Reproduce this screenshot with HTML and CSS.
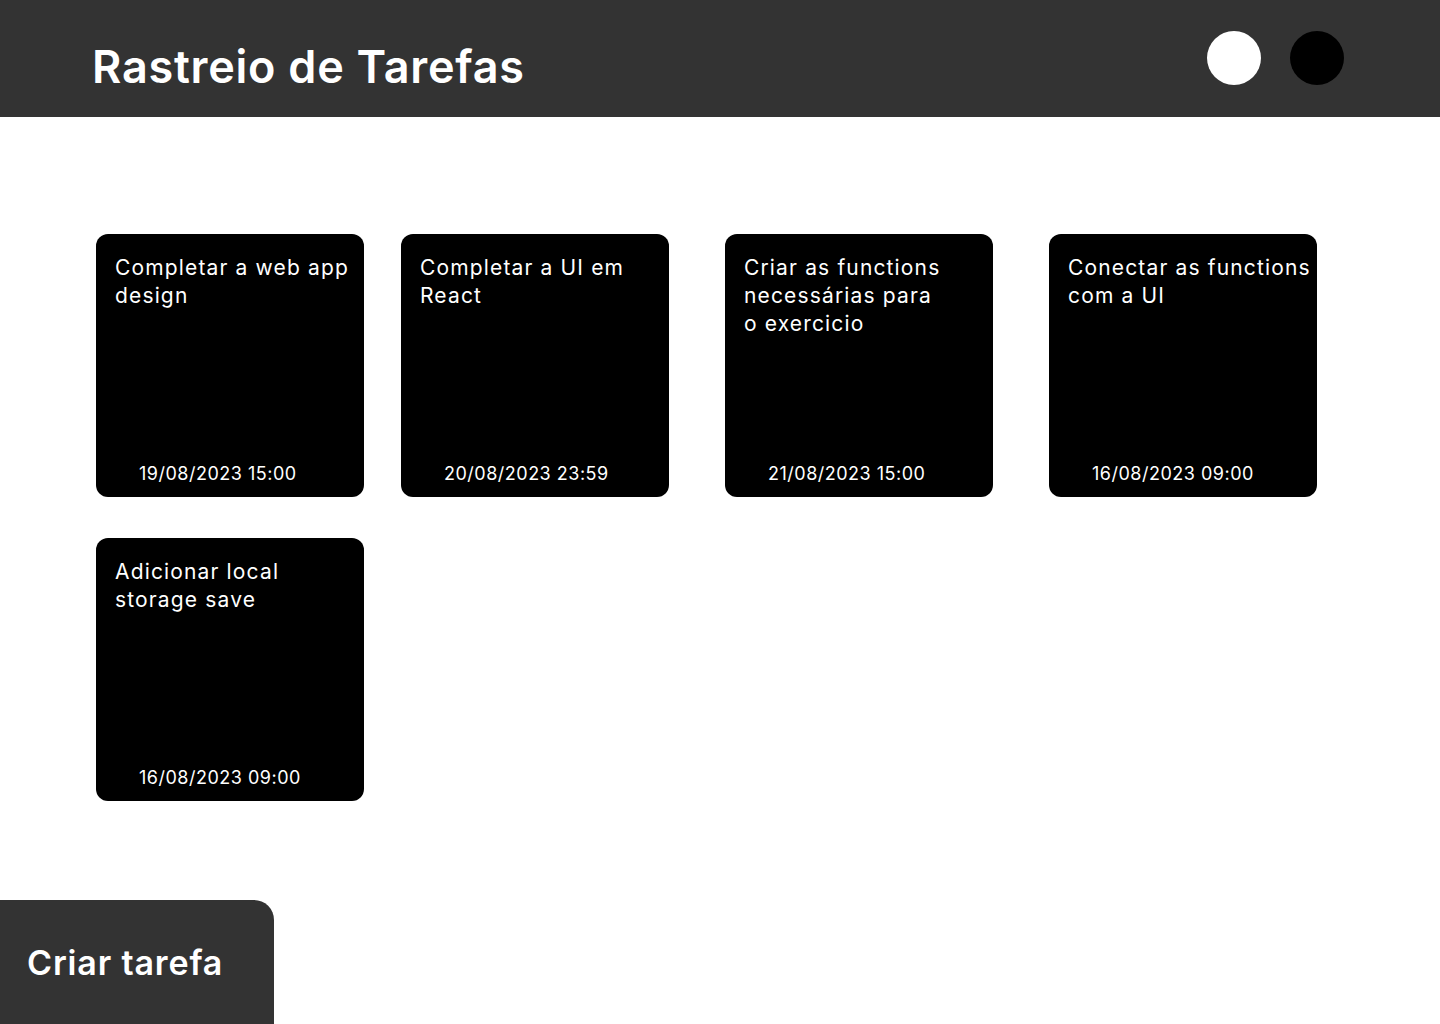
FILE: index.html
```html
<!DOCTYPE html>
<html lang="pt">
<head>
<meta charset="utf-8">
<title>Rastreio de Tarefas</title>
<link rel="stylesheet" href="styles.css">
</head>
<body>
<header class="topbar">
  <h1 class="title">Rastreio de Tarefas</h1>
  <div class="theme-dots">
    <span class="dot dot-light"></span>
    <span class="dot dot-dark"></span>
  </div>
</header>
<main class="board">
  <div class="card"><p class="card-text">Completar a web app design</p><p class="card-date">19/08/2023 15:00</p></div>
  <div class="card"><p class="card-text">Completar a UI em React</p><p class="card-date">20/08/2023 23:59</p></div>
  <div class="card"><p class="card-text">Criar as functions<br>necessárias para<br>o exercicio</p><p class="card-date">21/08/2023 15:00</p></div>
  <div class="card"><p class="card-text">Conectar as functions com a UI</p><p class="card-date">16/08/2023 09:00</p></div>
  <div class="card"><p class="card-text">Adicionar local storage save</p><p class="card-date">16/08/2023 09:00</p></div>
</main>
<button class="create-btn">Criar tarefa</button>
</body>
</html>
```
FILE: styles.css
```css
* { box-sizing: border-box; }
html, body { margin: 0; padding: 0; }
body {
  width: 1440px;
  height: 1024px;
  background: #ffffff;
  font-family: Inter, "Noto Sans", sans-serif;
  position: relative;
  overflow: hidden;
}
.topbar {
  height: 117px;
  background: #333333;
  display: flex;
  align-items: center;
  justify-content: space-between;
  padding: 0 96px 0 92px;
}
.title {
  margin: 16px 0 0 0;
  color: #ffffff;
  font-size: 45px;
  font-weight: 600;
  letter-spacing: 0.75px;
}
.theme-dots {
  display: flex;
  gap: 29px;
  margin-top: -2px;
}
.dot {
  width: 54px;
  height: 54px;
  border-radius: 50%;
  display: block;
}
.dot-light { background: #ffffff; }
.dot-dark { background: #000000; }
.board {
  display: grid;
  grid-template-columns: 305px 324px 324px 268px;
  row-gap: 41px;
  padding: 117px 0 0 96px;
}
.card {
  width: 268px;
  height: 263px;
  background: #000000;
  border-radius: 12px;
  padding: 20px 0 0 19px;
  display: flex;
  flex-direction: column;
  justify-content: space-between;
  color: #ffffff;
}
.card-text {
  margin: 0;
  font-size: 21px;
  line-height: 28px;
  letter-spacing: 1.15px;
  padding-right: 0;
}
.card-date {
  margin: 0 0 11px 24px;
  font-size: 18px;
  line-height: 24px;
  letter-spacing: 0.5px;
}
.create-btn {
  position: absolute;
  left: 0;
  bottom: 0;
  width: 274px;
  height: 124px;
  background: #333333;
  border: none;
  border-radius: 0 20px 0 0;
  color: #ffffff;
  font-family: Inter, "Noto Sans", sans-serif;
  font-size: 34px;
  font-weight: 600;
  letter-spacing: 0.85px;
  text-align: left;
  padding: 0 0 0 27px;
}
```
